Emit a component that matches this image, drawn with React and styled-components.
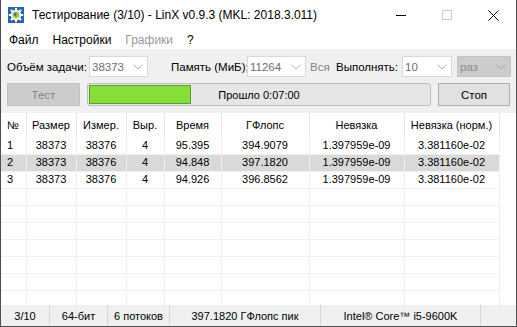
import styled, { createGlobalStyle } from 'styled-components';

const GlobalStyle = createGlobalStyle`
  html, body {
    margin: 0;
    padding: 0;
    background: #ffffff;
  }
  * {
    box-sizing: border-box;
  }
`;

const columns = [
  { key: 'n', title: '№', width: 25, align: 'left' },
  { key: 'size', title: 'Размер', width: 50 },
  { key: 'meas', title: 'Измер.', width: 50 },
  { key: 'runs', title: 'Выр.', width: 38 },
  { key: 'time', title: 'Время', width: 57 },
  { key: 'gflops', title: 'ГФлопс', width: 88 },
  { key: 'res', title: 'Невязка', width: 95 },
  { key: 'resn', title: 'Невязка (норм.)', width: 95 },
];

const results = [
  { n: '1', size: '38373', meas: '38376', runs: '4', time: '95.395', gflops: '394.9079', res: '1.397959e-09', resn: '3.381160e-02' },
  { n: '2', size: '38373', meas: '38376', runs: '4', time: '94.848', gflops: '397.1820', res: '1.397959e-09', resn: '3.381160e-02', selected: true },
  { n: '3', size: '38373', meas: '38376', runs: '4', time: '94.926', gflops: '396.8562', res: '1.397959e-09', resn: '3.381160e-02' },
];

const TOTAL_ROWS = 10;

const AppIcon = () => (
  <svg width="16" height="16" viewBox="0 0 16 16">
    <rect x="0" y="0" width="16" height="16" fill="#2467b0" />
    <g fill="#ffffff">
      <circle cx="8" cy="8" r="5.2" />
      <rect x="7" y="0.8" width="2" height="3" />
      <rect x="7" y="12.2" width="2" height="3" />
      <rect x="0.8" y="7" width="3" height="2" />
      <rect x="12.2" y="7" width="3" height="2" />
      <rect x="7" y="0.8" width="2" height="3" transform="rotate(45 8 8)" />
      <rect x="7" y="12.2" width="2" height="3" transform="rotate(45 8 8)" />
      <rect x="0.8" y="7" width="3" height="2" transform="rotate(45 8 8)" />
      <rect x="12.2" y="7" width="3" height="2" transform="rotate(45 8 8)" />
    </g>
    <circle cx="8" cy="8" r="3.4" fill="#a4c93a" />
    <circle cx="7.2" cy="7.4" r="1.4" fill="#2b6fb8" />
  </svg>
);

const Chevron = ({ color }) => (
  <svg width="10" height="6" viewBox="0 0 10 6">
    <path d="M0.5 0.5 L5 5 L9.5 0.5" fill="none" stroke={color} strokeWidth="1" />
  </svg>
);

const Combo = ({ value, width, gap, disabled }) => (
  <ComboBox $width={width} $gap={gap} $disabled={disabled}>
    <ComboValue $disabled={disabled}>{value}</ComboValue>
    <Chevron color={disabled ? '#a8a8a8' : '#b4b4b4'} />
  </ComboBox>
);

const App = () => {
  const rows = Array.from({ length: TOTAL_ROWS }, (_, i) => results[i] || null);

  return (
    <>
      <GlobalStyle />
      <Window>
        <TitleBar>
          <TitleIcon>
            <AppIcon />
          </TitleIcon>
          <TitleText>Тестирование (3/10) - LinX v0.9.3 (MKL: 2018.3.011)</TitleText>
          <Controls>
            <ControlButton>
              <svg width="10" height="10" viewBox="0 0 10 10">
                <path d="M0 5.5 H10" stroke="#000" strokeWidth="1" />
              </svg>
            </ControlButton>
            <ControlButton>
              <svg width="10" height="10" viewBox="0 0 10 10">
                <rect x="0.5" y="0.5" width="9" height="9" fill="none" stroke="#cccccc" strokeWidth="1" />
              </svg>
            </ControlButton>
            <ControlButton>
              <svg width="11" height="11" viewBox="0 0 11 11">
                <path d="M0.5 0.5 L10.5 10.5 M10.5 0.5 L0.5 10.5" stroke="#000" strokeWidth="1" />
              </svg>
            </ControlButton>
          </Controls>
        </TitleBar>

        <MenuBar>
          <MenuItem>Файл</MenuItem>
          <MenuItem>Настройки</MenuItem>
          <MenuItem $disabled>Графики</MenuItem>
          <MenuItem>?</MenuItem>
        </MenuBar>

        <Panel>
          <ControlRow>
            <Label $width={82}>Объём задачи:</Label>
            <Combo value="38373" width={59} />
            <Label $gap={23} $width={76}>Память (МиБ):</Label>
            <Combo value="11264" width={59} />
            <Hint>Вся</Hint>
            <Label $width={66}>Выполнять:</Label>
            <Combo value="10" width={50} />
            <Combo value="раз" width={54} gap={5} disabled />
          </ControlRow>
          <ControlRow>
            <PushButton $width={73} disabled>Тест</PushButton>
            <Progress>
              <ProgressFill style={{ width: `${(3 / 10) * 100}%` }} />
              <ProgressText>Прошло 0:07:00</ProgressText>
            </Progress>
            <PushButton $width={72}>Стоп</PushButton>
          </ControlRow>
        </Panel>

        <TableArea>
          <Grid>
            <colgroup>
              {columns.map((c) => (
                <col key={c.key} style={{ width: c.width }} />
              ))}
            </colgroup>
            <thead>
              <tr>
                {columns.map((c) => (
                  <HeadCell key={c.key} $align={c.align}>{c.title}</HeadCell>
                ))}
              </tr>
            </thead>
            <tbody>
              {rows.map((row, i) => (
                <Row key={i} $selected={row?.selected}>
                  {columns.map((c) => (
                    <Cell key={c.key} $align={c.align}>{row ? row[c.key] : ''}</Cell>
                  ))}
                </Row>
              ))}
            </tbody>
          </Grid>
        </TableArea>

        <StatusBar>
          <StatusPane $width={49}>3/10</StatusPane>
          <StatusPane $width={58}>64-бит</StatusPane>
          <StatusPane $width={62}>6 потоков</StatusPane>
          <StatusPane $width={151}>397.1820 ГФлопс пик</StatusPane>
          <StatusPane $width={160}>Intel® Core™ i5-9600K</StatusPane>
          <StatusPane $width={35} $last />
        </StatusBar>
      </Window>
    </>
  );
};

const Window = styled.div`
  width: 517px;
  height: 327px;
  display: flex;
  flex-direction: column;
  background: #f0f0f0;
  border-left: 1px solid #4f4f4f;
  border-right: 1px solid #4f4f4f;
  border-bottom: 1px solid #4f4f4f;
  font-family: 'Liberation Sans', Arial, sans-serif;
  font-size: 12px;
  color: #000;
  overflow: hidden;
`;

const TitleBar = styled.div`
  height: 30px;
  flex: none;
  display: flex;
  align-items: center;
  background: #ffffff;
`;

const TitleIcon = styled.div`
  width: 16px;
  height: 16px;
  margin-left: 7px;
  margin-right: 8px;
  display: flex;
`;

const TitleText = styled.div`
  flex: 1;
  font-size: 12px;
  white-space: nowrap;
`;

const Controls = styled.div`
  display: flex;
  height: 100%;
`;

const ControlButton = styled.div`
  width: 46px;
  height: 100%;
  display: flex;
  align-items: center;
  justify-content: center;
`;

const MenuBar = styled.div`
  height: 19px;
  flex: none;
  display: flex;
  align-items: center;
  background: #ffffff;
  padding-left: 1px;
`;

const MenuItem = styled.div`
  padding: 0 7px;
  font-size: 12px;
  color: ${(p) => (p.$disabled ? '#9a9a9a' : '#000')};
`;

const Panel = styled.div`
  flex: none;
  display: flex;
  flex-direction: column;
  gap: 6px;
  padding: 7px 6px 7px 6px;
`;

const ControlRow = styled.div`
  display: flex;
  align-items: center;
`;

const Label = styled.span`
  width: ${(p) => p.$width}px;
  flex: none;
  font-size: 11.5px;
  white-space: nowrap;
  margin-left: ${(p) => p.$gap || 0}px;
`;

const Hint = styled.span`
  width: 30px;
  flex: none;
  padding-left: 4px;
  font-size: 11.5px;
  color: #7b8797;
`;

const ComboBox = styled.div`
  width: ${(p) => p.$width}px;
  flex: none;
  height: 21px;
  margin-left: ${(p) => p.$gap || 0}px;
  display: flex;
  align-items: center;
  justify-content: space-between;
  padding: 0 4px 0 2px;
  background: ${(p) => (p.$disabled ? '#cccccc' : '#ffffff')};
  border: 1px solid ${(p) => (p.$disabled ? '#c4c4c4' : '#d9d9d9')};
`;

const ComboValue = styled.span`
  font-size: 11.5px;
  color: ${(p) => (p.$disabled ? '#8a8a8a' : '#6d6d6d')};
`;

const PushButton = styled.div`
  width: ${(p) => p.$width}px;
  height: 23px;
  flex: none;
  display: flex;
  align-items: center;
  justify-content: center;
  font-size: 11.5px;
  background: ${(p) => (p.disabled ? '#cccccc' : '#e1e1e1')};
  border: 1px solid ${(p) => (p.disabled ? '#c2c2c2' : '#adadad')};
  color: ${(p) => (p.disabled ? '#838383' : '#000')};
`;

const Progress = styled.div`
  position: relative;
  flex: 1;
  height: 23px;
  margin: 0 7px;
  border: 1px solid #bcbcbc;
  border-radius: 3px;
  background: #e6e6e6;
  padding: 1px;
  display: flex;
`;

const ProgressFill = styled.div`
  height: 100%;
  background: #86df39;
  border: 1px solid #5b9e2a;
`;

const ProgressText = styled.span`
  position: absolute;
  inset: 0;
  display: flex;
  align-items: center;
  justify-content: center;
  font-size: 11px;
`;

const TableArea = styled.div`
  flex: 1;
  min-height: 0;
  overflow: hidden;
  background: #ffffff;
`;

const Grid = styled.table`
  table-layout: fixed;
  border-collapse: collapse;
  width: 498px;
  font-family: 'Liberation Sans', Arial, sans-serif;
  font-size: 11px;
`;

const HeadCell = styled.th`
  height: 24px;
  padding: ${(p) => (p.$align ? '0 0 0 6px' : '0')};
  font-weight: normal;
  text-align: ${(p) => p.$align || 'center'};
  border-right: 1px solid #e5e5e5;
  white-space: nowrap;
`;

const Row = styled.tr`
  background: ${(p) => (p.$selected ? '#d9d9d9' : 'transparent')};
`;

const Cell = styled.td`
  height: 17px;
  padding: ${(p) => (p.$align ? '0 0 0 6px' : '0')};
  text-align: ${(p) => p.$align || 'center'};
  border-right: 1px solid #f0f0f0;
  border-bottom: 1px solid #f0f0f0;
  white-space: nowrap;
  line-height: 15px;
`;

const StatusBar = styled.div`
  height: 21px;
  flex: none;
  display: flex;
  align-items: center;
  background: #f0f0f0;
`;

const StatusPane = styled.div`
  width: ${(p) => p.$width}px;
  flex: ${(p) => (p.$last ? 1 : 'none')};
  height: 100%;
  display: flex;
  align-items: center;
  justify-content: center;
  font-size: 11px;
  white-space: nowrap;
  border-right: ${(p) => (p.$last ? 'none' : '1px solid #d7d7d7')};
`;

export default App;
